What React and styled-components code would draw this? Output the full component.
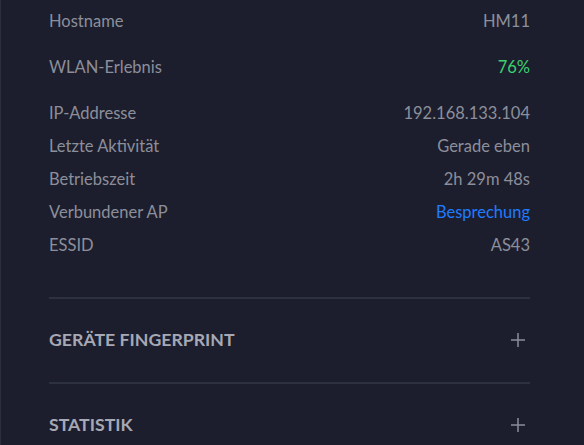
import React from 'react';
import styled, { createGlobalStyle } from 'styled-components';

const GlobalStyle = createGlobalStyle`
  html, body {
    margin: 0;
    padding: 0;
    background: #1c1e2d;
  }
  body {
    font-family: Lato, "Noto Sans", sans-serif;
  }
`;

const groups = [
  [{ label: 'Hostname', value: 'HM11' }],
  [{ label: 'WLAN-Erlebnis', value: '76%', tone: 'good' }],
  [
    { label: 'IP-Addresse', value: '192.168.133.104' },
    { label: 'Letzte Aktivität', value: 'Gerade eben' },
    { label: 'Betriebszeit', value: '2h 29m 48s' },
    { label: 'Verbundener AP', value: 'Besprechung', tone: 'link' },
    { label: 'ESSID', value: 'AS43' },
  ],
];

const sections = ['Geräte Fingerprint', 'Statistik'];

const toneColors = {
  good: '#3bd170',
  link: '#1f7bff',
};

function PlusIcon() {
  return (
    <svg width="16" height="16" viewBox="0 0 16 16" fill="none">
      <path d="M8 1v14M1 8h14" stroke="#8a8d99" strokeWidth="1.5" />
    </svg>
  );
}

function App() {
  return (
    <Panel>
      <GlobalStyle />
      <Inner>
        <Details>
          {groups.map((group, i) => (
            <Group key={i}>
              {group.map(row => (
                <Row key={row.label}>
                  <Label>{row.label}</Label>
                  <Value tone={row.tone}>{row.value}</Value>
                </Row>
              ))}
            </Group>
          ))}
        </Details>
        {sections.map(title => (
          <Section key={title}>
            <SectionTitle>{title}</SectionTitle>
            <PlusIcon />
          </Section>
        ))}
      </Inner>
    </Panel>
  );
}

export default App;

const Panel = styled.div`
  height: 445px;
  overflow: hidden;
  background: #1c1e2d;
  border-left: 1px solid #2b2e3c;
  box-sizing: border-box;
`;

const Inner = styled.div`
  width: 481px;
  margin-left: 48px;
  padding-top: 4px;
`;

const Details = styled.div`
  display: flex;
  flex-direction: column;
  gap: 13px;
  margin-bottom: 36px;
`;

const Group = styled.div`
  display: flex;
  flex-direction: column;
`;

const Row = styled.div`
  display: flex;
  justify-content: space-between;
  align-items: center;
  height: 33px;
  font-size: 16.5px;
`;

const Label = styled.span`
  color: #8c8f9b;
`;

const Value = styled.span`
  color: ${props => toneColors[props.tone] || '#8c8f9b'};
`;

const Section = styled.div`
  display: flex;
  justify-content: space-between;
  align-items: center;
  height: 85px;
  border-top: 2px solid #2e3140;
  padding: 0 4px 2px 0;
  box-sizing: border-box;
`;

const SectionTitle = styled.span`
  color: #a6a8b4;
  font-size: 17.7px;
  font-weight: 700;
  text-transform: uppercase;
`;
